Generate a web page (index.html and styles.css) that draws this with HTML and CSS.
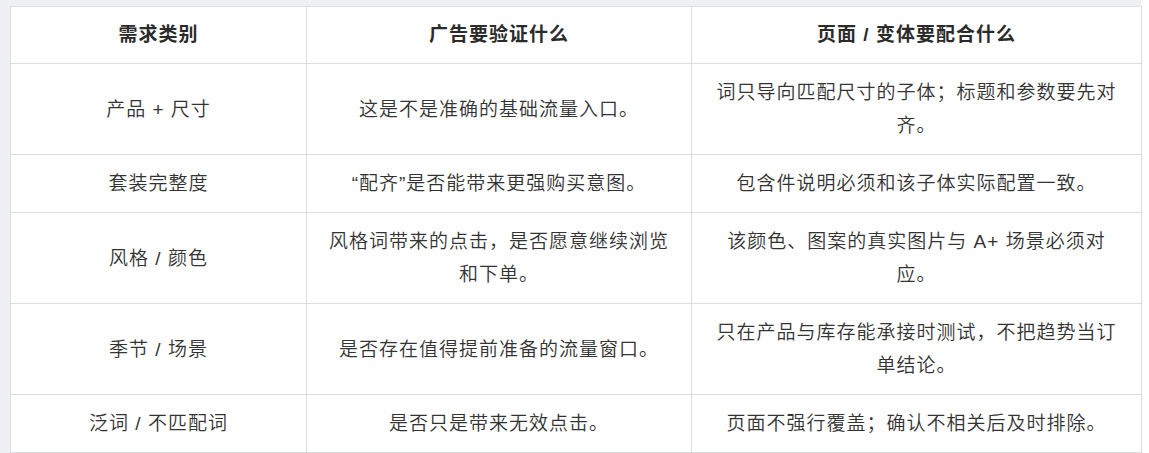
FILE: index.html
```html
<!DOCTYPE html>
<html lang="zh-CN">
<head>
<meta charset="utf-8">
<title>需求类别</title>
<link rel="stylesheet" href="styles.css">
</head>
<body>
<div class="wrap">
  <table class="grid">
    <colgroup>
      <col class="c1">
      <col class="c2">
      <col class="c3">
    </colgroup>
    <thead>
      <tr>
        <th>需求类别</th>
        <th>广告要验证什么</th>
        <th>页面 / 变体要配合什么</th>
      </tr>
    </thead>
    <tbody>
      <tr>
        <td>产品 + 尺寸</td>
        <td>这是不是准确的基础流量入口。</td>
        <td>词只导向匹配尺寸的子体；标题和参数要先对齐。</td>
      </tr>
      <tr>
        <td>套装完整度</td>
        <td>“配齐”是否能带来更强购买意图。</td>
        <td>包含件说明必须和该子体实际配置一致。</td>
      </tr>
      <tr>
        <td>风格 / 颜色</td>
        <td>风格词带来的点击，是否愿意继续浏览和下单。</td>
        <td>该颜色、图案的真实图片与 A+ 场景必须对应。</td>
      </tr>
      <tr>
        <td>季节 / 场景</td>
        <td>是否存在值得提前准备的流量窗口。</td>
        <td>只在产品与库存能承接时测试，不把趋势当订单结论。</td>
      </tr>
      <tr>
        <td>泛词 / 不匹配词</td>
        <td>是否只是带来无效点击。</td>
        <td>页面不强行覆盖；确认不相关后及时排除。</td>
      </tr>
    </tbody>
  </table>
</div>
</body>
</html>
```

FILE: styles.css
```css
html, body {
  margin: 0;
  padding: 0;
  background: #ffffff;
  overflow: hidden;
}
.wrap {
  width: 1131px;
  padding: 6px 0 0 10px;
  background: #eff0f3;
}
.grid {
  width: 1131px;
  table-layout: fixed;
  border-collapse: collapse;
  background: #ffffff;
  font-family: "Liberation Sans", "Noto Sans CJK SC", sans-serif;
  font-size: 19px;
  letter-spacing: 1px;
  font-weight: 350;
  color: #333333;
}
.c1 { width: 296px; }
.c2 { width: 385px; }
.c3 { width: 450px; }
.grid th,
.grid td {
  border: 1px solid #dcdde1;
  padding: 12px 18px;
  text-align: center;
  vertical-align: middle;
  line-height: 33px;
}
.grid th {
  font-weight: 700;
  color: #2b2b2b;
  line-height: 32px;
}
```
